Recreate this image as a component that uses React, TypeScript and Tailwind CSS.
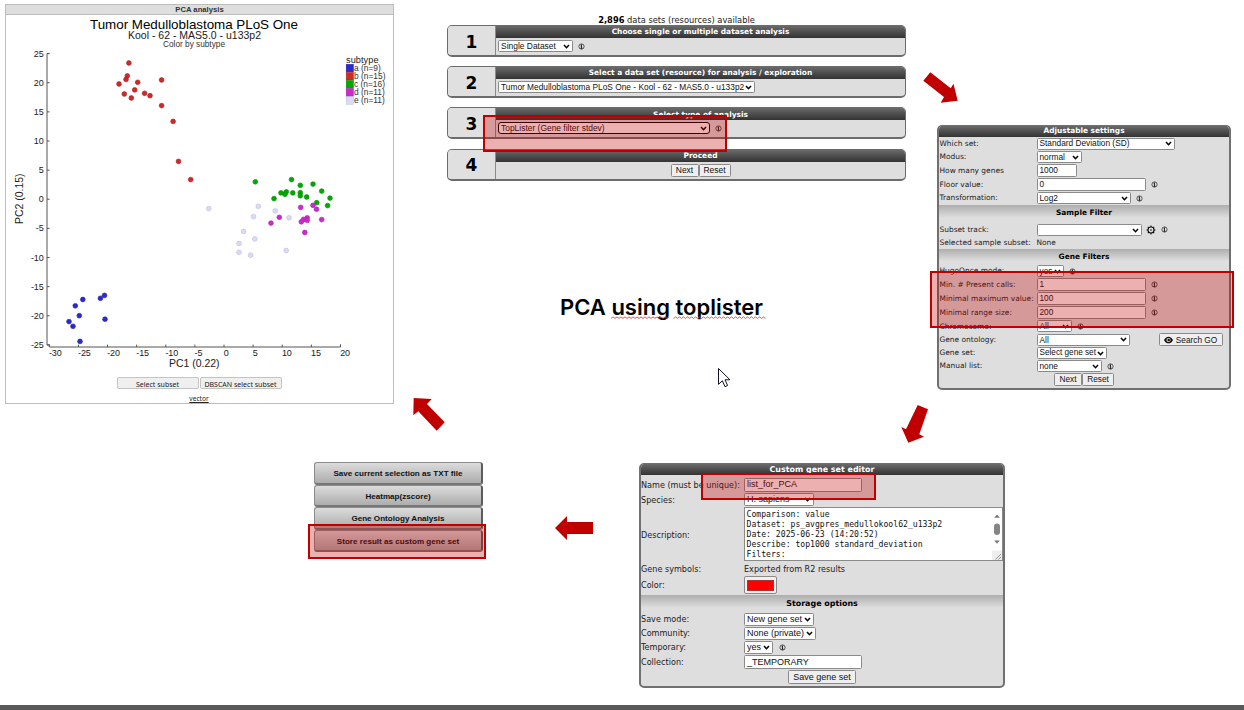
import type { ReactNode } from 'react';
import clsx from 'clsx';

type Point = [number, number];
type Series = { label: string; fill: string; stroke: string; points: Point[] };

const series: Series[] = [
  {
    label: 'a (n=9)',
    fill: '#2a2acd',
    stroke: '#2020a8',
    points: [[82.8, 299.5], [75.3, 305.8], [79.3, 315.7], [69, 321.6], [73, 326.3], [80, 341.4], [100.4, 298.3], [104.5, 295.4], [105, 319.2]],
  },
  {
    label: 'b (n=15)',
    fill: '#cd2a2a',
    stroke: '#a82020',
    points: [[128.9, 63], [127.3, 75.9], [126, 79.4], [119, 84], [137.7, 82.3], [161.6, 80], [134.7, 89.9], [124.3, 94], [131.3, 98], [144.6, 93.3], [150, 95.7], [161.6, 105.6], [173.1, 121.4], [178.5, 161.4], [190.7, 179.6]],
  },
  {
    label: 'c (n=16)',
    fill: '#00aa00',
    stroke: '#008c00',
    points: [[255.3, 181.8], [291.5, 179.6], [300.3, 185.3], [313, 184.1], [321.7, 191.1], [330, 198.1], [281, 192.9], [286.3, 191.8], [285, 194.3], [292.8, 192.9], [300.3, 192.7], [300.3, 195.8], [306.7, 197], [274, 198.6], [316.7, 202.7], [327.6, 205.6]],
  },
  {
    label: 'd (n=11)',
    fill: '#cd2acd',
    stroke: '#a820a8',
    points: [[300.7, 207.4], [313, 205.3], [316.5, 209.2], [321.7, 219.6], [307.2, 217.8], [303.5, 219.4], [307.2, 220.4], [301.3, 221.8], [279.3, 217.3], [271, 223.1], [304.8, 232.5]],
  },
  {
    label: 'e (n=11)',
    fill: '#dadaf8',
    stroke: '#bdbde0',
    points: [[208.8, 208.6], [258.3, 206.3], [253.5, 216.6], [275.2, 210.9], [289, 217.8], [243.6, 231.4], [254.8, 238.9], [239, 243.5], [239, 252.3], [250.6, 255.2], [286.2, 250.5]],
  },
];

const yTicks = [25, 20, 15, 10, 5, 0, -5, -10, -15, -20, -25];
const xTicks = [-30, -25, -20, -15, -10, -5, 0, 5, 10, 15, 20];

function Info() {
  return (
    <svg viewBox="0 0 8 8" className="h-[7px] w-[7px] shrink-0">
      <circle cx="4" cy="4" r="3" fill="none" stroke="#333" strokeWidth="0.9" />
      <path d="M4 1.6V6.4M3 3.2H4M2.9 6H5.1" fill="none" stroke="#222" strokeWidth="1.1" />
    </svg>
  );
}

function Select({ children, className }: { children?: ReactNode; className: string }) {
  return (
    <div className={clsx('flex shrink-0 items-center justify-between bg-white pr-[2px] pl-[2px] whitespace-nowrap text-[#111]', className)}>
      <span className="leading-none">{children}</span>
      <svg viewBox="0 0 8 6" className="h-[5px] w-[7px] shrink-0">
        <path d="M1 1.2L4 4.4L7 1.2" fill="none" stroke="#000" strokeWidth="1.9" />
      </svg>
    </div>
  );
}

function Field({ children, className }: { children: ReactNode; className: string }) {
  return (
    <div className={clsx('flex shrink-0 items-center rounded-[1.5px] border border-[#8a8a8a] bg-white pl-[2px] leading-none text-[#111]', className)}>
      {children}
    </div>
  );
}

function Button({ children, className }: { children: ReactNode; className: string }) {
  return (
    <button className={clsx('flex shrink-0 items-center justify-center rounded-[1.5px] border border-[#8a8a8a] bg-[#efefef] leading-none whitespace-nowrap text-[#111]', className)}>
      {children}
    </button>
  );
}

function Bar({ children, className }: { children: ReactNode; className: string }) {
  return (
    <div className={clsx("flex shrink-0 items-center justify-center bg-linear-to-b from-[#6a6a6a] to-[#333] font-['DejaVu_Sans',sans-serif] leading-none font-bold whitespace-nowrap text-white", className)}>
      {children}
    </div>
  );
}

function Section({ children, className }: { children: ReactNode; className: string }) {
  return (
    <div className={clsx("flex shrink-0 items-center justify-center bg-linear-to-b from-[#aeaeae] to-[#dedede] to-75% font-['DejaVu_Sans',sans-serif] leading-none font-bold text-black", className)}>
      {children}
    </div>
  );
}

function PcaPanel() {
  return (
    <section className="absolute top-[4px] left-[5px] flex h-[400px] w-[389px] flex-col border border-[#bdbdbd] bg-white">
      <h2 className="flex h-[10px] shrink-0 items-center justify-center border-b border-[#bdbdbd] bg-[#dedede] font-['Liberation_Sans',sans-serif] text-[7.7px] leading-none font-bold text-[#333]">
        PCA analysis
      </h2>
      <svg viewBox="6 15 387 357" className="h-[357px] w-[387px] shrink-0 font-['Liberation_Sans',sans-serif]" fill="#1a1a1a">
        <text x="90" y="28.8" fontSize="13.4" textLength="208" fill="#000">Tumor Medulloblastoma PLoS One</text>
        <text x="128" y="39.4" fontSize="11.2" textLength="133" lengthAdjust="spacingAndGlyphs">Kool - 62 - MAS5.0 - u133p2</text>
        <text x="163" y="47.4" fontSize="8.6" textLength="62" lengthAdjust="spacingAndGlyphs" fill="#333">Color by subtype</text>
        <path d="M49.5 53.5H47V345H49.5M49.5 345V347H340.5V344.5" fill="none" stroke="#555" strokeWidth="1" />
        {yTicks.map((v, i) => (
          <g key={v}>
            <path d={`M47 ${53.6 + i * 29.13}h2.6`} stroke="#555" strokeWidth="1" />
            <text x="43.5" y={56.6 + i * 29.13} fontSize="9" letterSpacing="-0.15" textAnchor="end">{v}</text>
          </g>
        ))}
        {xTicks.map((v, i) => (
          <g key={v}>
            <path d={`M${49.3 + i * 29.12} 347v-2.4`} stroke="#555" strokeWidth="1" />
            <text x={49 + i * 29.12} y="355.8" fontSize="9" letterSpacing="-0.15">{v}</text>
          </g>
        ))}
        <text x="169" y="366.9" fontSize="10.8" textLength="50.5" lengthAdjust="spacingAndGlyphs">PC1 (0.22)</text>
        <text transform="translate(23.3 224) rotate(-90)" fontSize="10.8" textLength="50.5" lengthAdjust="spacingAndGlyphs">PC2 (0.15)</text>
        <text x="346" y="62.7" fontSize="9.2" textLength="32.5">subtype</text>
        {series.map((s, i) => (
          <g key={s.label}>
            <rect x="346.2" y={64.3 + i * 8.1} width="7.2" height="7.6" fill={s.fill} stroke={s.stroke} strokeWidth="0.5" />
            <text x="354" y={71 + i * 8.1} fontSize="8.4" fill="#333">{s.label}</text>
            {s.points.map(([x, y]) => (
              <circle key={`${x}-${y}`} cx={x} cy={y} r="2.4" fill={s.fill} stroke={s.stroke} strokeWidth="0.6" />
            ))}
          </g>
        ))}
      </svg>
      <div className="flex flex-col items-center pt-[5px] pr-[1px] font-['Noto_Sans',sans-serif] text-[7px] leading-none text-[#222]">
        <div className="flex gap-[1px]">
          <button className="flex h-[12px] w-[82px] items-center justify-center rounded-[2px] border border-[#c4c4c4] bg-[#efefef] pt-[3px]">Select subset</button>
          <button className="flex h-[12px] w-[82px] items-center justify-center rounded-[2px] border border-[#c4c4c4] bg-[#efefef] pt-[3px]">DBSCAN select subset</button>
        </div>
        <a className="mt-[7px] text-[6.6px] underline">vector</a>
      </div>
    </section>
  );
}

function Step({ n, title, children }: { n: number; title: string; children: ReactNode }) {
  return (
    <div className="flex h-[32px] w-[459px] overflow-hidden rounded-[5px] border-[1.5px] border-b-2 border-[#6c6c6c] bg-[#dedede]">
      <div className="flex w-[48px] shrink-0 items-center justify-center border-r border-[#8a8a8a] bg-[#e0e0e0] pt-[3px] font-['DejaVu_Sans',sans-serif] text-[17px] leading-none font-bold text-black">
        {n}
      </div>
      <div className="flex grow flex-col">
        <Bar className="h-[12px] text-[7.43px]">{title}</Bar>
        <div className="flex grow items-center font-['Liberation_Sans',sans-serif] text-[8.45px]">{children}</div>
      </div>
    </div>
  );
}

function Wizard() {
  return (
    <section className="absolute top-[15px] left-[447px] flex w-[459px] flex-col">
      <p className="h-[10px] text-center font-['DejaVu_Sans',sans-serif] text-[8.3px] leading-[10px] text-[#222]">
        <b className="text-black">2,896</b> data sets (resources) available
      </p>
      <div className="flex flex-col gap-[9.2px]">
        <Step n={1} title="Choose single or multiple dataset analysis">
          <Select className="mb-[1px] ml-[2px] h-[12px] w-[75px] rounded-[1.5px] border border-[#8a8a8a]">Single Dataset</Select>
          <span className="ml-[5px] flex"><Info /></span>
        </Step>
        <Step n={2} title="Select a data set (resource) for analysis / exploration">
          <Select className="mb-[1px] ml-[2px] h-[12px] w-[257px] rounded-[1.5px] border border-[#8a8a8a] text-[8.35px]">Tumor Medulloblastoma PLoS One - Kool - 62 - MAS5.0 - u133p2</Select>
        </Step>
        <Step n={3} title="Select type of analysis">
          <Select className="mb-[1px] ml-[2px] h-[12px] w-[212px] rounded-[3px] border-[1.5px] border-black">TopLister (Gene filter stdev)</Select>
          <span className="ml-[5px] flex"><Info /></span>
        </Step>
        <Step n={4} title="Proceed">
          <div className="flex grow justify-center pt-[1px]">
            <Button className="h-[13px] w-[28px]">Next</Button>
            <Button className="h-[13px] w-[32px]">Reset</Button>
          </div>
        </Step>
      </div>
    </section>
  );
}

function SettingRow({ label, className, children }: { label: string; className: string; children: ReactNode }) {
  return (
    <div className={clsx('flex shrink-0 items-center', className)}>
      <span className="w-[97.5px] shrink-0 pl-[0.5px] font-['DejaVu_Sans',sans-serif] text-[7.45px] leading-none whitespace-nowrap text-[#222]">{label}</span>
      {children}
    </div>
  );
}

function SettingsPanel() {
  return (
    <section className="absolute top-[124.5px] left-[937px] flex h-[265px] w-[294px] flex-col overflow-hidden rounded-[5px] border-2 border-t-[1px] border-[#707070] bg-[#dedede] font-['Liberation_Sans',sans-serif] text-[8.3px]">
      <Bar className="h-[11px] text-[7.4px]">Adjustable settings</Bar>
      <SettingRow label="Which set:" className="h-[14px]">
        <Select className="h-[12px] w-[138px] rounded-[1.5px] border border-[#8a8a8a]">Standard Deviation (SD)</Select>
      </SettingRow>
      <SettingRow label="Modus:" className="h-[13px]">
        <Select className="h-[12px] w-[45px] rounded-[1.5px] border border-[#8a8a8a]">normal</Select>
      </SettingRow>
      <SettingRow label="How many genes" className="h-[14px]">
        <Field className="h-[13px] w-[40px]">1000</Field>
      </SettingRow>
      <SettingRow label="Floor value:" className="h-[14px]">
        <Field className="mr-[5px] h-[13px] w-[109px]">0</Field>
        <Info />
      </SettingRow>
      <SettingRow label="Transformation:" className="h-[13px]">
        <Select className="mr-[5px] h-[12px] w-[94px] rounded-[1.5px] border border-[#8a8a8a]">Log2</Select>
        <Info />
      </SettingRow>
      <Section className="h-[17px] text-[7.43px]">Sample Filter</Section>
      <SettingRow label="Subset track:" className="h-[16px]">
        <Select className="mt-[1px] mr-[4px] h-[12px] w-[105px] rounded-[1.5px] border border-[#8a8a8a]" />
        <svg viewBox="0 0 10 10" className="mr-[5px] h-[10px] w-[10px]">
          <circle cx="5" cy="5" r="3" fill="none" stroke="#111" strokeWidth="1.1" />
          <circle cx="5" cy="5" r="0.8" fill="#111" />
          <path d="M5 0.5V2M5 8V9.5M0.5 5H2M8 5H9.5M1.8 1.8L2.8 2.8M7.2 7.2L8.2 8.2M1.8 8.2L2.8 7.2M7.2 2.8L8.2 1.8" stroke="#111" strokeWidth="1.1" />
        </svg>
        <Info />
      </SettingRow>
      <SettingRow label="Selected sample subset:" className="h-[11px]">
        <span className="font-['DejaVu_Sans',sans-serif] text-[7.42px] leading-none text-[#222]">None</span>
      </SettingRow>
      <Section className="h-[16px] text-[7.43px]">Gene Filters</Section>
      <SettingRow label="HugoOnce mode:" className="h-[13px]">
        <Select className="mr-[5px] h-[12px] w-[27px] rounded-[1.5px] border border-[#8a8a8a]">yes</Select>
        <Info />
      </SettingRow>
      <SettingRow label="Min. # Present calls:" className="h-[14px]">
        <Field className="mr-[5px] h-[13px] w-[109px]">1</Field>
        <Info />
      </SettingRow>
      <SettingRow label="Minimal maximum value:" className="h-[14px]">
        <Field className="mr-[5px] h-[13px] w-[109px]">100</Field>
        <Info />
      </SettingRow>
      <SettingRow label="Minimal range size:" className="h-[14px]">
        <Field className="mr-[5px] h-[13px] w-[109px]">200</Field>
        <Info />
      </SettingRow>
      <SettingRow label="Chromosome:" className="h-[13.5px]">
        <Select className="mr-[5px] h-[12px] w-[35px] rounded-[1.5px] border border-[#8a8a8a]">All</Select>
        <Info />
      </SettingRow>
      <SettingRow label="Gene ontology:" className="h-[13.5px]">
        <Select className="mr-[29px] h-[12px] w-[93px] rounded-[1.5px] border border-[#8a8a8a]">All</Select>
        <Button className="h-[13px] w-[64px] gap-[3px]">
          <svg viewBox="0 0 10 8" className="h-[8px] w-[9px]">
            <path d="M0 4C1.6 1 3.2 0.3 5 0.3S8.4 1 10 4C8.4 7 6.8 7.7 5 7.7S1.6 7 0 4Z" fill="#111" />
            <circle cx="5" cy="4" r="2.3" fill="#efefef" />
            <circle cx="5.2" cy="4.1" r="1.4" fill="#111" />
          </svg>
          Search GO
        </Button>
      </SettingRow>
      <SettingRow label="Gene set:" className="h-[13px]">
        <Select className="h-[12px] w-[70px] rounded-[1.5px] border border-[#8a8a8a] text-[8.2px]">Select gene set</Select>
      </SettingRow>
      <SettingRow label="Manual list:" className="h-[13px]">
        <Select className="mr-[5px] h-[12px] w-[65px] rounded-[1.5px] border border-[#8a8a8a]">none</Select>
        <Info />
      </SettingRow>
      <div className="flex h-[15px] shrink-0 justify-center pt-[0.6px]">
        <Button className="h-[13px] w-[28px]">Next</Button>
        <Button className="h-[13px] w-[32px]">Reset</Button>
      </div>
    </section>
  );
}

function EditorRow({ label, className, children }: { label: string; className: string; children: ReactNode }) {
  return (
    <div className={clsx('flex shrink-0 items-center', className)}>
      <span className="w-[103px] shrink-0 pt-[1px] font-['DejaVu_Sans',sans-serif] text-[8.1px] leading-none whitespace-nowrap text-[#222]">{label}</span>
      {children}
    </div>
  );
}

function EditorPanel() {
  return (
    <section className="absolute top-[463px] left-[639px] flex h-[225px] w-[366px] flex-col overflow-hidden rounded-[5px] border-2 border-t-[1px] border-[#707070] bg-[#dedede] font-['Liberation_Sans',sans-serif] text-[9px]">
      <Bar className="h-[11px] pt-[1px] text-[7.94px]">Custom gene set editor</Bar>
      <EditorRow label="Name (must be unique):" className="h-[18px] pt-[1px]">
        <Field className="h-[14px] w-[118px]">list_for_PCA</Field>
      </EditorRow>
      <EditorRow label="Species:" className="h-[13px]">
        <Select className="h-[13px] w-[70px] rounded-[1.5px] border border-[#8a8a8a]">H. sapiens</Select>
      </EditorRow>
      <EditorRow label="Description:" className="h-[57px]">
        <div className="mb-[2px] flex h-[54px] w-[259px] overflow-hidden border border-[#8a8a8a] bg-white">
          <pre className="grow pt-[1px] pl-[1.5px] font-['DejaVu_Sans_Mono',monospace] text-[8.14px] leading-[10px] text-[#111]">{`Comparison: value
Dataset: ps_avgpres_medullokool62_u133p2
Date: 2025-06-23 (14:20:52)
Describe: top1000 standard_deviation
Filters:`}</pre>
          <svg viewBox="0 0 10 52" className="h-[52px] w-[10px] shrink-0">
            <path d="M2.2 9.8L5 6.4L7.8 9.8Z" fill="#777" />
            <rect x="2" y="15.5" width="6" height="11.5" rx="3" fill="#858585" />
            <path d="M2.2 32.4L5 35.8L7.8 32.4Z" fill="#777" />
            <rect x="0" y="42.5" width="10" height="9.5" fill="#eee" />
            <path d="M3.5 51.5L9 46M6.5 51.5L9 49" stroke="#777" strokeWidth="0.8" />
          </svg>
        </div>
      </EditorRow>
      <EditorRow label="Gene symbols:" className="h-[12px]">
        <span className="pt-[1px] font-['DejaVu_Sans',sans-serif] text-[8.1px] leading-none text-[#222]">Exported from R2 results</span>
      </EditorRow>
      <EditorRow label="Color:" className="h-[20px]">
        <div className="flex h-[18px] w-[33px] items-center justify-center rounded-[2px] border border-[#8a8a8a] bg-[#efefef]">
          <div className="h-[11px] w-[27px] border border-[#a33] bg-[#f00]" />
        </div>
      </EditorRow>
      <Section className="h-[17px] text-[7.94px]">Storage options</Section>
      <EditorRow label="Save mode:" className="h-[14px]">
        <Select className="h-[13px] w-[70px] rounded-[1.5px] border border-[#8a8a8a]">New gene set</Select>
      </EditorRow>
      <EditorRow label="Community:" className="h-[14px]">
        <Select className="h-[13px] w-[72px] rounded-[1.5px] border border-[#8a8a8a]">None (private)</Select>
      </EditorRow>
      <EditorRow label="Temporary:" className="h-[14px]">
        <Select className="mr-[6px] h-[13px] w-[29px] rounded-[1.5px] border border-[#8a8a8a]">yes</Select>
        <Info />
      </EditorRow>
      <EditorRow label="Collection:" className="h-[16px]">
        <Field className="h-[14px] w-[118px]">_TEMPORARY</Field>
      </EditorRow>
      <div className="flex h-[15px] shrink-0 justify-center">
        <Button className="h-[14px] w-[68px]">Save gene set</Button>
      </div>
    </section>
  );
}

const actions = ['Save current selection as TXT file', 'Heatmap(zscore)', 'Gene Ontology Analysis', 'Store result as custom gene set'];

function ActionStack() {
  return (
    <section className="absolute top-[462px] left-[314px] flex w-[169px] flex-col">
      {actions.map((a) => (
        <button key={a} className="flex h-[22.5px] items-center justify-center rounded-[3px] border border-r-2 border-b-2 border-[#8c8c8c] border-r-[#5c5c5c] border-b-[#777] bg-linear-to-b from-[#dcdcdc] to-[#adadad] pt-[3px] font-['Liberation_Sans',sans-serif] text-[8.1px] leading-none font-bold text-[#111]">
          {a}
        </button>
      ))}
    </section>
  );
}

function Highlight({ className }: { className: string }) {
  return <div className={clsx('absolute border-2 border-[#c00000] bg-[#c00000]/31', className)} />;
}

export default function App() {
  return (
    <main className="relative h-[710px] w-[1244px] overflow-hidden bg-white">
      <PcaPanel />
      <Wizard />
      <SettingsPanel />
      <EditorPanel />
      <ActionStack />

      <h1 className="absolute top-[293px] left-[560px] font-['Inter',sans-serif] text-[22px] leading-[28px] font-semibold whitespace-nowrap text-black">
        PCA using toplister
      </h1>

      <Highlight className="top-[115px] left-[483px] h-[37px] w-[244px]" />
      <Highlight className="top-[271px] left-[930px] h-[57px] w-[304px]" />
      <Highlight className="top-[524px] left-[308px] h-[35px] w-[178px]" />
      <Highlight className="top-[473px] left-[701px] h-[27px] w-[175px]" />

      <svg viewBox="0 0 1244 710" className="pointer-events-none absolute inset-0 h-[710px] w-[1244px]">
        <g fill="#c00000">
          <path d="M930.3 72.3L950.7 88.3L953.5 83.7L957.7 100.7L940.7 102.7L944 97L923.3 80.7Z" />
          <path d="M917.7 405L928 409.3L919.3 434.3L924 436.7L908.3 442.7L901.3 427L906 429.3Z" />
          <path d="M413.7 398L431.7 399L427 404L444.7 422.3L436.7 430.7L418.3 411.3L413.3 415.3Z" />
          <path d="M555 528L567 516V522H593V534H567V540Z" />
        </g>
        <path
          d={`M611 318.4${Array.from({ length: 29 }, (_, i) => `l2 ${i % 2 ? 1.5 : -1.5}`).join('')}M673.5 318.4${Array.from({ length: 46 }, (_, i) => `l2 ${i % 2 ? 1.5 : -1.5}`).join('')}`}
          fill="none"
          stroke="#f33"
          strokeWidth="0.9"
        />
        <path d="M718.5 368.5V384.3L722.3 380.8L725 386.7L727.6 385.5L725 379.8H730Z" fill="#fff" stroke="#112" strokeWidth="1" />
      </svg>

      <div className="absolute bottom-0 left-0 h-[5px] w-full bg-[#595959]" />
    </main>
  );
}
